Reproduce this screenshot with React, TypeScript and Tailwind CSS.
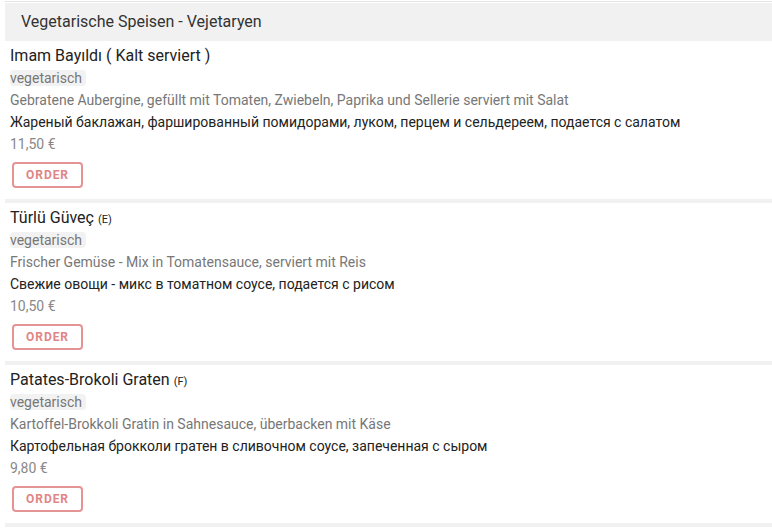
const items = [
  {
    name: 'Imam Bayıldı ( Kalt serviert )',
    note: '',
    de: 'Gebratene Aubergine, gefüllt mit Tomaten, Zwiebeln, Paprika und Sellerie serviert mit Salat',
    ru: 'Жареный баклажан, фаршированный помидорами, луком, перцем и сельдереем, подается с салатом',
    price: '11,50 €',
  },
  {
    name: 'Türlü Güveç',
    note: '(E)',
    de: 'Frischer Gemüse - Mix in Tomatensauce, serviert mit Reis',
    ru: 'Свежие овощи - микс в томатном соусе, подается с рисом',
    price: '10,50 €',
  },
  {
    name: 'Patates-Brokoli Graten',
    note: '(F)',
    de: 'Kartoffel-Brokkoli Gratin in Sahnesauce, überbacken mit Käse',
    ru: 'Картофельная брокколи гратен в сливочном соусе, запеченная с сыром',
    price: '9,80 €',
  },
]

export default function App() {
  return (
    <div className="min-h-[529px] bg-white font-['Roboto',sans-serif] pt-px">
      <div className="ml-[5px] border-t border-[#e4e4e4]">
        <div className="h-[38px] mt-px bg-[#f1f1f1] pl-4 flex items-center text-[16px] text-[#333]">
          Vegetarische Speisen - Vejetaryen
        </div>
        {items.map((item) => (
          <div key={item.name} className="border-b-4 border-[#f1f1f1]">
            <div className="pl-[5px] pt-1 pb-[11px] text-[14px] leading-[22px]">
              <div className="h-[22px] text-[16px] text-[#222]">
                {item.name}
                {item.note && <span className="text-[11px] leading-none ml-1">{item.note}</span>}
              </div>
              <div className="h-[22px]">
                <span className="bg-[#f2f2f2] rounded text-[#777] pr-1">vegetarisch</span>
              </div>
              <div className="h-[22px] text-[#777]">{item.de}</div>
              <div className="h-[22px] text-[#222]">{item.ru}</div>
              <div className="h-[22px] text-[#888]">{item.price}</div>
              <button className="block mt-[7px] ml-[2px] w-[71px] h-[26px] border-2 border-[#e49494] rounded text-[#e08585] text-[12px] font-bold tracking-[0.08em]">
                ORDER
              </button>
            </div>
          </div>
        ))}
      </div>
    </div>
  )
}
